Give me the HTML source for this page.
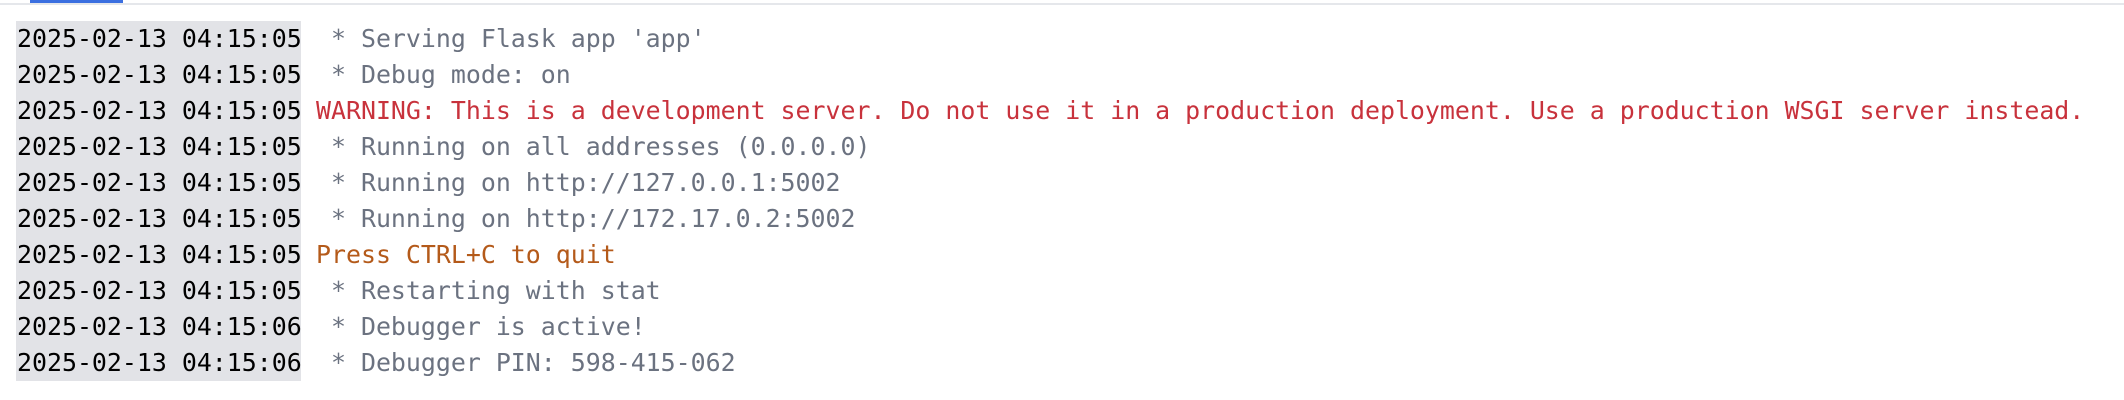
<!DOCTYPE html>
<html><head><meta charset="utf-8"><style>
html,body{margin:0;padding:0;width:2124px;height:400px;background:#fff;overflow:hidden}
.top{position:absolute;left:0;top:3px;width:2124px;height:2px;background:#e5e7eb}
.tab{position:absolute;left:30px;top:0;width:93px;height:3px;background:#3b6fe0}
.log{position:absolute;left:16px;top:21px;font-family:"DejaVu Sans Mono","Liberation Mono",monospace;font-size:24.9px;line-height:36px}
.row{display:flex;height:36px;white-space:pre}
.ts{background:#e2e3e7;color:#000;width:285px;padding-left:1px;box-sizing:border-box}
.msg{padding-left:15px;color:#6b7280}
.red{color:#c8323c}
.org{color:#b45a1a}
</style></head><body>
<div class="top"></div><div class="tab"></div>
<div class="log"><div class="row"><span class="ts">2025-02-13 04:15:05</span><span class="msg"> * Serving Flask app 'app'</span></div><div class="row"><span class="ts">2025-02-13 04:15:05</span><span class="msg"> * Debug mode: on</span></div><div class="row"><span class="ts">2025-02-13 04:15:05</span><span class="msg red">WARNING: This is a development server. Do not use it in a production deployment. Use a production WSGI server instead.</span></div><div class="row"><span class="ts">2025-02-13 04:15:05</span><span class="msg"> * Running on all addresses (0.0.0.0)</span></div><div class="row"><span class="ts">2025-02-13 04:15:05</span><span class="msg"> * Running on http://127.0.0.1:5002</span></div><div class="row"><span class="ts">2025-02-13 04:15:05</span><span class="msg"> * Running on http://172.17.0.2:5002</span></div><div class="row"><span class="ts">2025-02-13 04:15:05</span><span class="msg org">Press CTRL+C to quit</span></div><div class="row"><span class="ts">2025-02-13 04:15:05</span><span class="msg"> * Restarting with stat</span></div><div class="row"><span class="ts">2025-02-13 04:15:06</span><span class="msg"> * Debugger is active!</span></div><div class="row"><span class="ts">2025-02-13 04:15:06</span><span class="msg"> * Debugger PIN: 598-415-062</span></div></div>
</body></html>
